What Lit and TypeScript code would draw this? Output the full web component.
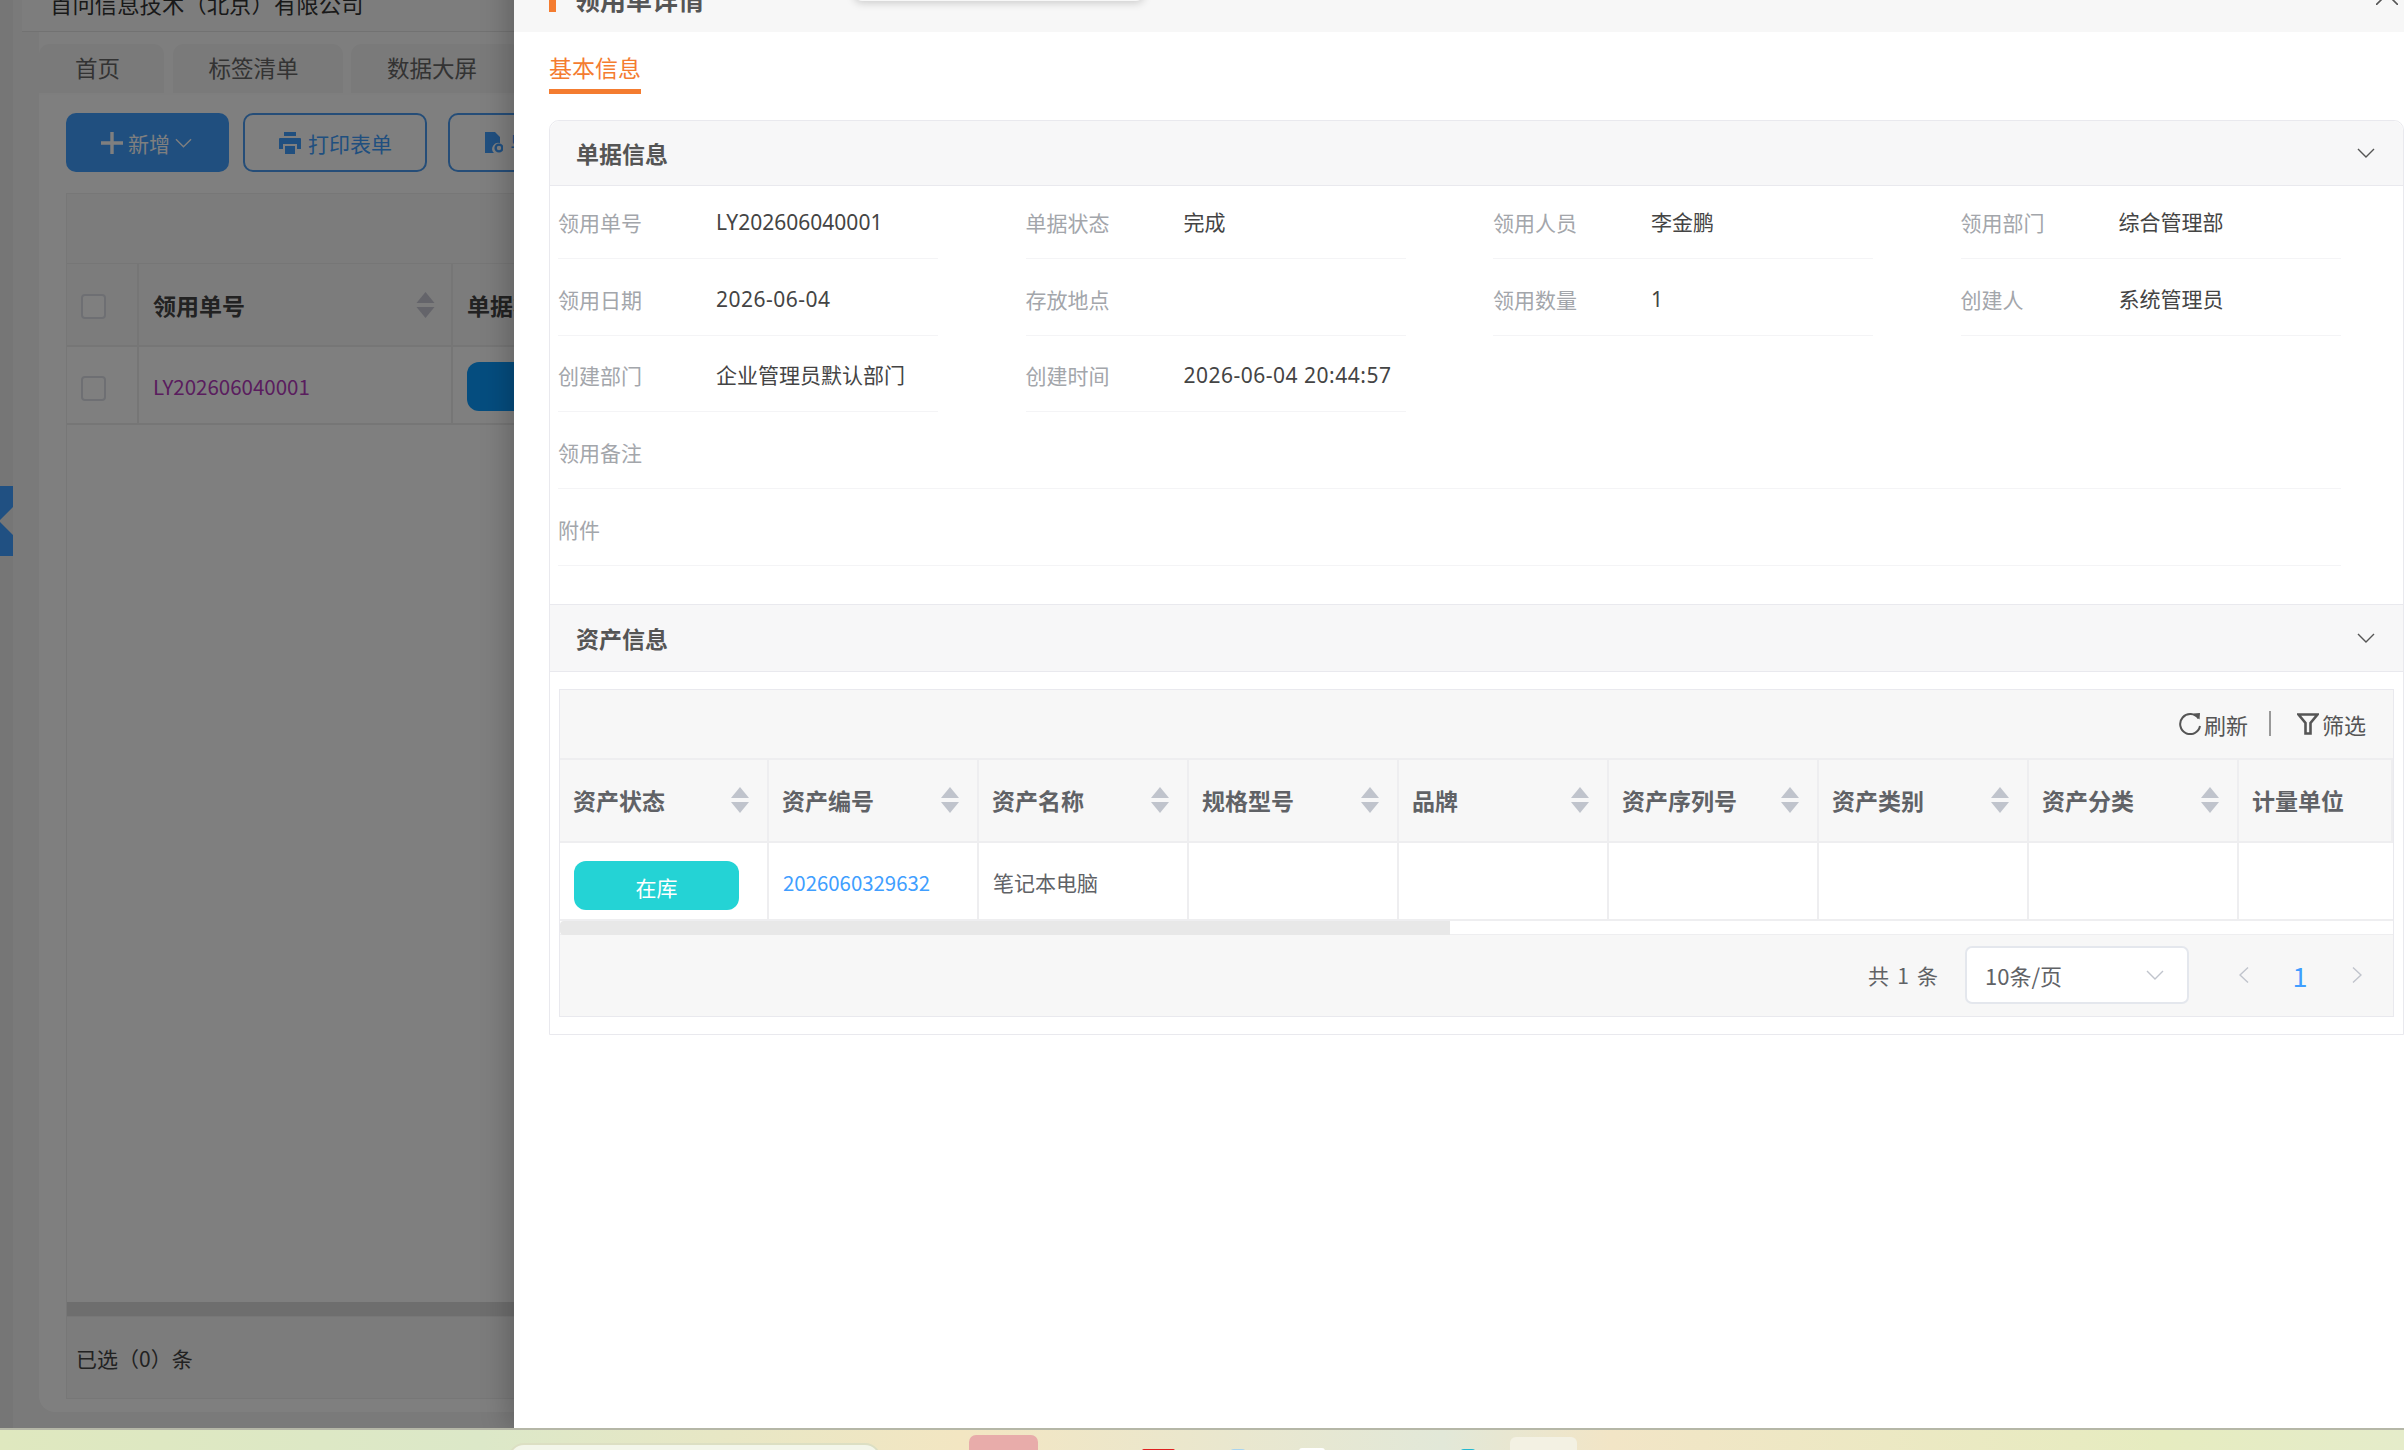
import { LitElement, html, css, svg } from "lit";
import { customElement } from "lit/decorators.js";

const chevron = svg`<polyline points="1,1 9,9 17,1" fill="none" stroke="currentColor" stroke-width="1.4"/>`;
const sortIcon = html`<svg class="sort" viewBox="0 0 18 26"><polygon points="9,0 18,11 0,11" fill="currentColor"/><polygon points="0,15 18,15 9,26" fill="currentColor"/></svg>`;
const chev = html`<svg class="chev" viewBox="0 0 18 10">${chevron}</svg>`;

const fields: [string, string, boolean?][] = [
  ["领用单号", "LY202606040001"], ["单据状态", "完成"], ["领用人员", "李金鹏"], ["领用部门", "综合管理部"],
  ["领用日期", "2026-06-04", true], ["存放地点", ""], ["领用数量", "1"], ["创建人", "系统管理员"],
  ["创建部门", "企业管理员默认部门"], ["创建时间", "2026-06-04 20:44:57", true],
];
const columns = ["资产状态", "资产编号", "资产名称", "规格型号", "品牌", "资产序列号", "资产类别", "资产分类", "计量单位"];

@customElement("app-root")
export class AppRoot extends LitElement {
  static styles = css`
    :host { display: block; width: 2404px; height: 1450px; overflow: hidden; font-family: "Noto Sans CJK SC", "Noto Sans", sans-serif; }
    * { box-sizing: border-box; }
    .stage { position: relative; height: 1428px; overflow: hidden; background: #f4f4f4; }

    /* background page */
    .bg { display: flex; height: 100%; }
    .rail { width: 13px; flex: none; background: #ececec; }
    .work { flex: 1; min-width: 0; display: flex; flex-direction: column; }
    .brand { height: 32px; margin-left: 9px; padding-left: 28px; border-bottom: 1px solid #e4e4e4; display: flex; align-items: flex-end; background: #fbfbfb; }
    .brand span { font-size: 22.4px; line-height: 32px; color: #333; position: relative; top: -12px; white-space: nowrap; }
    .tabs { display: flex; gap: 8.5px; margin-left: 26px; height: 63px; padding-top: 12px; background: #fdfdfd; }
    .tab { height: 49px; border-radius: 10px 10px 0 0; background: #f4f4f4; color: #666; font-size: 22.5px; display: flex; align-items: center; justify-content: center; padding: 0 44px 3px 36px; }
    .panel { margin-left: 26px; width: 2400px; height: 1317px; background: #fff; border-bottom-left-radius: 16px; padding: 18px 0 13px 27px; display: flex; flex-direction: column; }
    .btns { display: flex; height: 59px; flex: none; margin-bottom: 21px; }
    .btn { height: 59px; border-radius: 10px; display: flex; align-items: center; font-size: 21px; color: #409eff; border: 2px solid #4a9bf0; margin-right: 14px; padding: 0 33px 0 34px; gap: 7px; white-space: nowrap; }
    .btn.primary { background: #409eff; color: #fff; width: 163px; padding: 0 0 0 35px; gap: 5px; border: none; }
    .btn.third { margin-left: 7px; }
    .btn.primary .c { width: 17px; height: 10px; }
    .bt { flex: 1; min-height: 0; border: 1px solid #eee; display: flex; flex-direction: column; width: 2380px; }
    .bt-tool { height: 70px; flex: none; background: #f8f8f8; border-bottom: 1px solid #ececec; }
    .bt-row { display: grid; grid-template-columns: 72px 314px 1fr; flex: none; border-bottom: 2px solid #ececec; }
    .bt-row > div { border-right: 2px solid #ececec; display: flex; align-items: center; padding-left: 14px; font-size: 23px; }
    .bt-head { height: 83px; background: #f8f8f8; color: #444; font-weight: 700; }
    .bt-body { height: 78px; color: #b43bbd; }
    .bt-body > div { font-size: 20.5px; padding-top: 2px; }
    .bt-head .sort { width: 19px; height: 26px; margin-left: auto; margin-right: 16px; color: #c8c8d4; }
    .cb { width: 25px; height: 25px; border: 2px solid #dcdfe6; border-radius: 4px; background: #fff; position: relative; top: 2px; }
    .bt-status { width: 200px; height: 49px; background: #0a9bff; border-radius: 12px; }
    .bt-rest { flex: 1; }
    .bt-scroll { height: 14px; flex: none; background: #ddd; border-top: 1px solid #ddd; }
    .bt-foot { height: 82px; flex: none; background: #f8f8f8; border-top: 1px solid #eee; display: flex; align-items: center; padding-left: 9px; font-size: 21px; color: #444; }
    .overlay { position: absolute; inset: 0; background: rgba(0, 0, 0, 0.5); }
    .rail-tab { position: absolute; left: 0; top: 486px; }

    /* drawer */
    .drawer { position: absolute; left: 514px; right: 0; top: -36px; bottom: 0; background: #fff; box-shadow: -6px 0 26px rgba(0, 0, 0, 0.22); }
    .d-head { height: 68px; background: #f7f7f7; display: flex; align-items: center; padding: 0 6px 0 35px; position: relative; }
    .d-head .bar { width: 7px; height: 28px; background: #f47c30; margin-right: 18px; }
    .d-head .title { font-size: 26px; font-weight: 700; color: #555; }
    .d-head .close { width: 22px; height: 22px; margin-left: auto; margin-bottom: 8px; color: #555; }
    .toast { position: absolute; left: 340px; width: 290px; top: 0; height: 37px; border-radius: 8px; background: #f7f7f7; box-shadow: 0 2px 8px rgba(0, 0, 0, 0.18); }
    .d-tabs { height: 63px; margin-left: 35px; padding-top: 19px; }
    .d-tab { display: inline-block; height: 43px; font-size: 23px; line-height: 33px; color: #f47c30; border-bottom: 5px solid #f47c30; }
    .d-body { margin: 25px 0 0 35px; border: 1px solid #e9e9ee; border-radius: 10px 10px 0 0; }
    .s-head { height: 66px; background: #f7f7f8; border-bottom: 1px solid #e9e9ee; display: flex; align-items: center; justify-content: space-between; padding: 0 28px 0 26px; font-size: 23px; font-weight: 700; color: #555; }
    .s-head.first { border-radius: 10px 10px 0 0; height: 65px; }
    .s-head.second { height: 68px; border-top: 1px solid #e9e9ee; }
    .chev { width: 18px; height: 10px; color: #555; display: block; }
    .form { padding: 22px 61px 38px 8px; display: grid; grid-template-columns: repeat(4, 380px); column-gap: 87.5px; row-gap: 25.67px; }
    .field { height: 51px; border-bottom: 1px solid #f4f4f6; display: flex; font-size: 21px; line-height: 28px; }
    .field.wide { grid-column: 1 / -1; }
    .field label { width: 158px; flex: none; color: #a3a6ab; }
    .field span { color: #444; white-space: nowrap; font-family: "Noto Sans", "Noto Sans CJK SC", sans-serif; }
    .field span.date { letter-spacing: 0.5px; }
    .assets { padding: 17px 9px 17px 9px; }
    .a-box { border: 1px solid #e9e9ee; }
    .a-tool { height: 70px; background: #f7f7f7; border-bottom: 2px solid #eeeef0; display: flex; align-items: center; justify-content: flex-end; padding-right: 27px; font-size: 22px; color: #555; }
    .a-tool .act { display: flex; align-items: center; gap: 3px; }
    .a-tool svg { width: 22px; height: 22px; }
    .a-tool .sep { width: 2px; height: 25px; background: #999; margin: 0 26px 0 21px; }
    .grid { display: grid; grid-template-columns: 209px repeat(7, 210px) 1fr; }
    .th { height: 83px; background: #f7f7f7; border-right: 2px solid #eeeef0; border-bottom: 2px solid #eeeef0; display: flex; align-items: center; padding: 0 18px 0 13px; font-size: 23px; font-weight: 700; color: #606266; white-space: nowrap; }
    .th:last-child, .td:last-child { border-right: none; }
    .th .sort { width: 18px; height: 26px; margin-left: auto; color: #c0c4cc; }
    .td { height: 78px; border-right: 2px solid #eeeef0; border-bottom: 2px solid #eeeef0; padding: 0 0 0 14px; display: flex; align-items: center; font-size: 21px; color: #606266; white-space: nowrap; }
    .td a { color: #409eff; font-size: 20.4px; position: relative; top: 1px; }
    .td .plain { position: relative; top: 1px; }
    .pill { width: 165px; height: 49px; background: #24d3d5; color: #fff; border-radius: 12px; display: flex; align-items: center; justify-content: center; padding-top: 3px; position: relative; top: 5px; }
    .track { height: 14px; background: #fff; border-bottom: 1px solid #eeeef0; }
    .thumb { width: 890px; height: 14px; background: #e8e8e8; border-radius: 4px 0 0 4px; }
    .pager { height: 81px; background: #f7f7f7; display: flex; align-items: center; font-size: 21px; color: #606266; justify-content: flex-end; padding-right: 31.5px; }
    .pager .sum { margin-right: 27px; word-spacing: 3.5px; }
    .select { width: 224px; height: 58px; background: #fff; border: 2px solid #e4e7ed; border-radius: 7px; display: flex; align-items: center; justify-content: space-between; padding: 0 23px 0 18px; margin-right: 50px; font-size: 22px; }
    .select .chev { color: #c0c4cc; }
    .pg-arrow { width: 10px; height: 16px; color: #c0c4cc; }
    .pg-num { color: #409eff; font-size: 27px; margin: 0 44px 0 43.5px; line-height: 1; }

    /* taskbar */
    .taskbar { height: 22px; position: relative; overflow: hidden; border-top: 2px solid #b5b7a7; background: linear-gradient(90deg, #dfe8bf 0%, #dce8c8 20%, #f3e6c2 40%, #e2e8d8 60%, #f2e5c6 67%, #e6ecc0 90%, #e5ecca 100%); }
    .taskbar > * { position: absolute; }
    .search { left: 508px; width: 373px; top: 13px; height: 40px; background: #f3f6ea; border: 2px solid #dcdfc3; border-radius: 16px; }
    .pink { left: 969px; width: 69px; top: 5px; height: 40px; background: #e8acaa; border-radius: 7px; }
    .cream { left: 1510px; width: 67px; top: 7px; height: 40px; background: #f3f1e3; border-radius: 6px; }
    .red { left: 1142px; width: 33px; top: 19px; height: 8px; background: #e02020; border-radius: 2px; }
    .blue { left: 1230px; width: 16px; top: 19px; height: 8px; background: #a8d4f0; border-radius: 8px; }
    .white { left: 1299px; width: 26px; top: 18px; height: 8px; background: #fff; border-radius: 3px; }
    .cyan { left: 1460px; width: 16px; top: 19px; height: 8px; background: #22b8d0; border-radius: 8px; }
    .clock { left: 2317px; top: 16px; font-size: 18px; line-height: 22px; color: #111; font-family: "Liberation Sans", sans-serif; letter-spacing: 0.5px; }
  `;

  render() {
    return html`
      <div class="stage">
        <div class="bg">
          <div class="rail"></div>
          <div class="work">
            <div class="brand"><span>首问信息技术（北京）有限公司</span></div>
            <div class="tabs"><div class="tab">首页</div><div class="tab">标签清单</div><div class="tab">数据大屏</div></div>
            <div class="panel">
              <div class="btns">
                <div class="btn primary">
                  <svg width="22" height="22" viewBox="0 0 22 22"><path d="M11 0v22M0 11h22" stroke="currentColor" stroke-width="3.4" stroke-linecap="round"/></svg>
                  <span>新增</span>
                  <svg class="c" viewBox="0 0 18 10">${chevron}</svg>
                </div>
                <div class="btn">
                  <svg width="22" height="22" viewBox="0 0 22 22"><path d="M5 0h12v4H5zM1 6h20a1 1 0 0 1 1 1v10h-4v-5H4v5H0V7a1 1 0 0 1 1-1zM6 14h10v8H6z" fill="currentColor"/></svg>
                  <span>打印表单</span>
                </div>
                <div class="btn third">
                  <svg width="19" height="22" viewBox="0 0 19 22"><path d="M1 0h10l5 5v6a6 6 0 0 0-6 10H1z" fill="currentColor"/><circle cx="15" cy="16" r="3.4" fill="none" stroke="currentColor" stroke-width="2.4"/></svg>
                  <span>导入表单</span>
                </div>
              </div>
              <div class="bt">
                <div class="bt-tool"></div>
                <div class="bt-row bt-head"><div><span class="cb"></span></div><div>领用单号${sortIcon}</div><div>单据状态</div></div>
                <div class="bt-row bt-body"><div><span class="cb"></span></div><div>LY202606040001</div><div><span class="bt-status"></span></div></div>
                <div class="bt-rest"></div>
                <div class="bt-scroll"></div>
                <div class="bt-foot">已选（0）条</div>
              </div>
            </div>
          </div>
        </div>
        <div class="overlay"></div>
        <svg class="rail-tab" width="13" height="70" viewBox="0 0 13 70"><path d="M0 0h13v21L0 34v2l13 13v21H0z" fill="#205082"/></svg>

        <div class="drawer">
          <div class="d-head">
            <span class="bar"></span><span class="title">领用单详情</span>
            <div class="toast"></div>
            <svg class="close" viewBox="0 0 22 22"><path d="M0 0l22 22M22 0L0 22" stroke="currentColor" stroke-width="1.6"/></svg>
          </div>
          <div class="d-tabs"><span class="d-tab">基本信息</span></div>
          <div class="d-body">
            <div class="s-head first"><span>单据信息</span>${chev}</div>
            <div class="form">
              ${fields.map(([k, v, d]) => html`<div class="field"><label>${k}</label><span class=${d ? "date" : ""}>${v}</span></div>`)}
              <div class="field wide"><label>领用备注</label></div>
              <div class="field wide"><label>附件</label></div>
            </div>
            <div class="s-head second"><span>资产信息</span>${chev}</div>
            <div class="assets">
              <div class="a-box">
                <div class="a-tool">
                  <div class="act">
                    <svg viewBox="0 0 22 22"><path d="M19.5 5.5A10 10 0 1 0 21 13" fill="none" stroke="currentColor" stroke-width="2"/><path d="M14.5 0.5L20.5 6.5L21 0z" fill="currentColor"/></svg>
                    <span>刷新</span>
                  </div>
                  <div class="sep"></div>
                  <div class="act">
                    <svg viewBox="0 0 22 22"><path d="M1.5 1.5h19L13.5 10v10.5h-5V10z" fill="none" stroke="currentColor" stroke-width="2.6" stroke-linejoin="miter"/></svg>
                    <span>筛选</span>
                  </div>
                </div>
                <div class="grid">
                  ${columns.map((c, i) => html`<div class="th">${c}${i < 8 ? sortIcon : ""}</div>`)}
                  <div class="td"><div class="pill">在库</div></div>
                  <div class="td"><a>2026060329632</a></div>
                  <div class="td"><span class="plain">笔记本电脑</span></div>
                  ${columns.slice(3).map(() => html`<div class="td"></div>`)}
                </div>
                <div class="track"><div class="thumb"></div></div>
                <div class="pager">
                  <span class="sum">共 1 条</span>
                  <div class="select"><span>10条/页</span>${chev}</div>
                  <svg class="pg-arrow" viewBox="0 0 10 16"><polyline points="9,0.5 1,8 9,15.5" fill="none" stroke="currentColor" stroke-width="1.4"/></svg>
                  <span class="pg-num">1</span>
                  <svg class="pg-arrow" viewBox="0 0 10 16"><polyline points="1,0.5 9,8 1,15.5" fill="none" stroke="currentColor" stroke-width="1.4"/></svg>
                </div>
              </div>
            </div>
          </div>
        </div>
      </div>
      <div class="taskbar">
        <div class="search"></div><div class="pink"></div><div class="red"></div><div class="blue"></div><div class="white"></div><div class="cyan"></div><div class="cream"></div>
        <div class="clock">10:10</div>
      </div>
    `;
  }
}
